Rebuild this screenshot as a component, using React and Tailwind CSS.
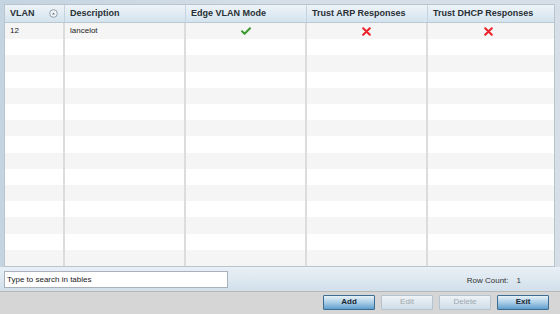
import React from 'react';

const columns = [
  { label: 'VLAN', width: 'w-[60px]', sort: true },
  { label: 'Description', width: 'w-[121px]' },
  { label: 'Edge VLAN Mode', width: 'w-[121px]' },
  { label: 'Trust ARP Responses', width: 'w-[121px]' },
  { label: 'Trust DHCP Responses', width: 'flex-1' },
];

const rows = [{ vlan: '12', desc: 'lancelot', edge: true, arp: false, dhcp: false }];

const Check = () => (
  <svg width="10" height="8" viewBox="0 0 10 8">
    <path d="M1 4.2 L3.6 6.8 L9 1.2" fill="none" stroke="#3c9a2e" strokeWidth="2" strokeLinecap="round" strokeLinejoin="round" />
  </svg>
);

const Cross = () => (
  <svg width="9" height="9" viewBox="0 0 9 9">
    <path d="M1.2 1.2 L7.8 7.8 M7.8 1.2 L1.2 7.8" stroke="#ec2028" strokeWidth="2" strokeLinecap="round" />
  </svg>
);

const SortIcon = () => (
  <svg width="9" height="9" viewBox="0 0 9 9">
    <circle cx="4.5" cy="4.5" r="3.8" fill="#f2f6f9" stroke="#8a959e" strokeWidth="0.9" />
    <path d="M2.9 5.4 L4.5 3.4 L6.1 5.4 Z" fill="#6d7882" />
  </svg>
);

const Flag = ({ on }) => (on ? <Check /> : <Cross />);

const Button = ({ children, disabled }) => (
  <button
    className={
      disabled
        ? 'w-[52px] h-[15px] text-[8px] text-[#a0a8ae] border border-[#b3c3cf] rounded-[1px] bg-gradient-to-b from-[#eef3f7] to-[#cfdde7]'
        : 'w-[52px] h-[15px] text-[8px] font-bold text-[#1b2630] border border-[#3c6c92] rounded-[1px] bg-gradient-to-b from-[#e6f1f8] via-[#a9cde6] to-[#5f9fcc]'
    }
  >
    {children}
  </button>
);

const App = () => {
  const body = Array.from({ length: 15 }, (_, i) => rows[i] || null);

  return (
    <div className="w-[560px] h-[314px] flex flex-col bg-[#d6dfe7] font-['Liberation_Sans',Arial,sans-serif] text-[#222] overflow-hidden">
      <div className="h-[267px] pt-[4px] pl-[4px] pr-[5px] bg-gradient-to-r from-[#c4d4e0] via-[#d6dfe7] to-[#d6dfe7]">
        <div className="h-full flex flex-col bg-white border border-[#b8c4ce]">
          <div className="h-[18px] flex bg-gradient-to-b from-[#eef4f9] to-[#d4e3ee] border-b border-[#b9c8d4]">
            {columns.map((c, i) => (
              <div
                key={c.label}
                className={`${c.width} flex items-center justify-between pl-[5px] pr-[6px] text-[9px] font-bold text-[#2a2f35] ${i < columns.length - 1 ? 'border-r border-[#c4d3de]' : ''}`}
              >
                <span>{c.label}</span>
                {c.sort && <SortIcon />}
              </div>
            ))}
          </div>
          <div className="flex-1 flex flex-col">
            {body.map((r, i) => (
              <div key={i} className={`flex-1 flex ${i % 2 === 0 ? 'bg-[#f5f5f5]' : 'bg-white'}`}>
                <div className="w-[60px] pl-[5px] flex items-center text-[8px] border-r-2 border-[#dcdcdc]">{r ? r.vlan : ''}</div>
                <div className="w-[121px] pl-[5px] flex items-center text-[8px] border-r-2 border-[#dcdcdc]">{r ? r.desc : ''}</div>
                <div className="w-[121px] flex items-center justify-center border-r-2 border-[#dcdcdc]">{r && <Flag on={r.edge} />}</div>
                <div className="w-[121px] flex items-center justify-center border-r-2 border-[#dcdcdc]">{r && <Flag on={r.arp} />}</div>
                <div className="flex-1 flex items-center justify-center pr-[6px]">{r && <Flag on={r.dhcp} />}</div>
              </div>
            ))}
          </div>
        </div>
      </div>

      <div className="h-[24px] flex items-center justify-between pl-[4px] pr-[39px] bg-gradient-to-b from-[#e9f0f6] to-[#d2e0eb]">
        <div className="w-[224px] h-[17px] mt-[1px] flex items-center pl-[2px] bg-white border border-[#a9b2ba] text-[8px] text-[#222]">
          Type to search in tables
        </div>
        <div className="flex items-center gap-[8px] mt-[3px] text-[8px] text-[#333]">
          <span>Row Count:</span>
          <span>1</span>
        </div>
      </div>

      <div className="flex-1 flex items-center justify-end gap-[6px] pr-[11px] pb-[2px] bg-[#d6d6d6] border-t border-[#b8b8b8]">
        <Button>Add</Button>
        <Button disabled>Edit</Button>
        <Button disabled>Delete</Button>
        <Button>Exit</Button>
      </div>
    </div>
  );
};

export default App;
